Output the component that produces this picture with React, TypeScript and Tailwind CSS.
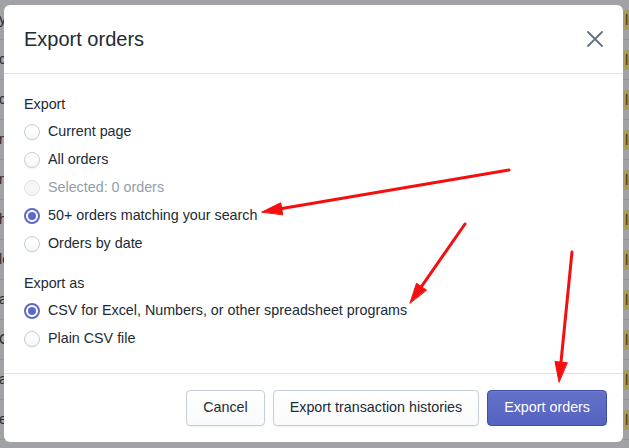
import React from 'react';

const bgRows = [
    { lead: 'y', y: -4 },
    { lead: 'c', y: 36 },
    { lead: 'c', y: 76 },
    { lead: 'n', y: 116 },
    { lead: 'n', y: 156 },
    { lead: 'h', y: 196 },
    { lead: 'le', y: 236 },
    { lead: 'a', y: 276 },
    { lead: 'C', y: 316 },
    { lead: 'a', y: 356 },
    { lead: 'e', y: 396 },
];

interface RadioProps {
    label: string;
    checked?: boolean;
    disabled?: boolean;
}

function Radio({ label, checked = false, disabled = false }: RadioProps) {
    return (
        <label className="flex h-7 items-center gap-2 cursor-pointer">
            {checked ? (
                <span className="flex h-4 w-4 items-center justify-center rounded-full border-2 border-[#5c6ac4] bg-white">
                    <span className="h-2 w-2 rounded-full bg-[#5c6ac4]" />
                </span>
            ) : disabled ? (
                <span className="h-4 w-4 rounded-full border border-[#dfe3e8] bg-[#f4f6f8]" />
            ) : (
                <span className="h-4 w-4 rounded-full border border-[#c4cdd5] bg-gradient-to-b from-white to-[#f4f6f8] shadow-[0_1px_0_rgba(22,29,37,0.05)]" />
            )}
            <span className={disabled ? 'text-[#919eab]' : 'text-[#212b36]'}>{label}</span>
        </label>
    );
}

export default function App() {
    return (
        <div
            className="relative h-[448px] w-[629px] overflow-hidden bg-[#a0a2a6] text-[14.3px]"
            style={{ fontFamily: '"Liberation Sans", Arial, sans-serif' }}
        >
            {/* page behind the overlay */}
            <div className="flex flex-col">
                {bgRows.map((r) => (
                    <div key={r.y} className="flex h-10 items-center justify-between border-b border-[#93959a] text-[#2b2d31]">
                        <span className="-ml-px">{r.lead}</span>
                        <span className="mr-[-40px] h-5 w-[48px] rounded-l-md bg-[#a39c5c] pl-1 text-[#3a3720]">le</span>
                    </div>
                ))}
                <div className="flex h-10 items-center text-[#2b2d31]">
                    <span className="w-[262px]">orlearty</span>
                    <span className="w-[125px]">$39.95</span>
                    <span className="flex h-5 items-center gap-1 rounded-full bg-[#8d9096] px-2">
                        <span className="h-2 w-2 rounded-full bg-[#4a4d53]" />
                        Paid
                    </span>
                    <span className="ml-auto mr-[-20px] flex h-5 items-center gap-1 rounded-l-md bg-[#a39c5c] pl-1 text-[#3a3720]">
                        <span className="h-2.5 w-2.5 rounded-full border-2 border-[#3a3720]" />
                        Unfulfilled
                    </span>
                </div>
            </div>

            {/* modal */}
            <div className="absolute left-[4px] top-[5px] flex h-[437px] w-[619px] flex-col rounded-md bg-white text-[#212b36]">
                <div className="flex items-center justify-between border-b border-[#dfe3e8] px-5 py-5">
                    <h2 className="text-xl leading-7">Export orders</h2>
                    <svg width="16" height="16" viewBox="0 0 16 16" className="text-[#637381]">
                        <path d="M1 1 L15 15 M15 1 L1 15" stroke="currentColor" strokeWidth="1.8" strokeLinecap="round" />
                    </svg>
                </div>

                <div className="flex flex-1 flex-col px-5 py-5">
                    <div className="leading-5">Export</div>
                    <div className="mt-1 flex flex-col">
                        <Radio label="Current page" />
                        <Radio label="All orders" />
                        <Radio label="Selected: 0 orders" disabled />
                        <Radio label="50+ orders matching your search" checked />
                        <Radio label="Orders by date" />
                    </div>
                    <div className="mt-[15px] leading-5">Export as</div>
                    <div className="mt-1 flex flex-col">
                        <Radio label="CSV for Excel, Numbers, or other spreadsheet programs" checked />
                        <Radio label="Plain CSV file" />
                    </div>
                </div>

                <div className="flex justify-end gap-2 border-t border-[#dfe3e8] px-4 py-4">
                    <button className="h-9 rounded border border-[#c4cdd5] bg-gradient-to-b from-white to-[#f9fafb] px-4 text-[#212b36] shadow-[0_1px_0_rgba(22,29,37,0.05)]">
                        Cancel
                    </button>
                    <button className="h-9 rounded border border-[#c4cdd5] bg-gradient-to-b from-white to-[#f9fafb] px-4 text-[#212b36] shadow-[0_1px_0_rgba(22,29,37,0.05)]">
                        Export transaction histories
                    </button>
                    <button className="h-9 rounded border border-[#3f4eae] bg-gradient-to-b from-[#6371c7] to-[#5563c1] px-4 text-white shadow-[inset_0_1px_0_0_#6f7bcb]">
                        Export orders
                    </button>
                </div>
            </div>

            {/* annotation arrows */}
            <svg className="pointer-events-none absolute left-0 top-0" width="629" height="448">
                <g fill="#f40f0f" stroke="#f40f0f" strokeWidth="3" strokeLinecap="round">
                    <line x1="509" y1="170" x2="282" y2="208.6" />
                    <polygon points="262,212 280.7,202.7 282.7,214.5" strokeWidth="1" />
                    <line x1="465" y1="224" x2="421.4" y2="286.6" />
                    <polygon points="410,303 416.5,283.2 426.3,290" strokeWidth="1" />
                    <line x1="572" y1="252" x2="561" y2="362" />
                    <polygon points="559,382 555,361.5 567,362.7" strokeWidth="1" />
                </g>
            </svg>
        </div>
    );
}
